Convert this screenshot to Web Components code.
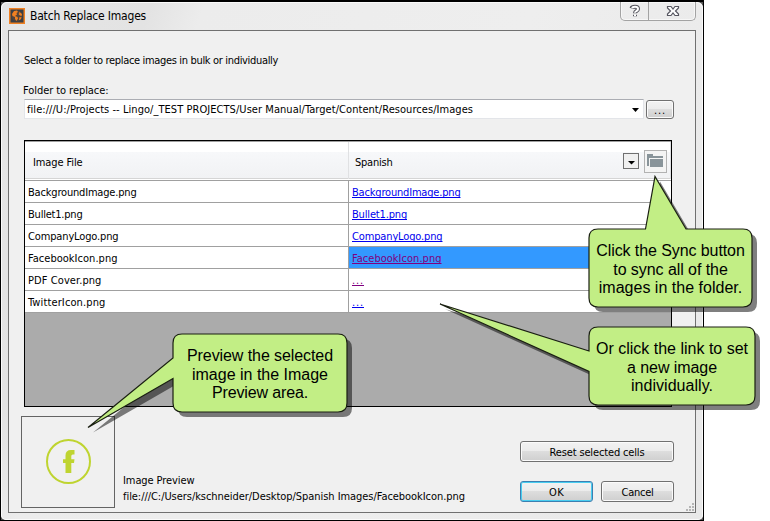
<!DOCTYPE html>
<html lang="en">
<head>
<meta charset="utf-8">
<title>Batch Replace Images</title>
<style>
html,body{margin:0;background:#fff}
body{width:770px;height:521px;overflow:hidden;position:relative;font:11px/14px "DejaVu Sans Condensed","DejaVu Sans",sans-serif;color:#000}
</style>
</head>
<body>
<batch-dialog></batch-dialog>
<call-out x="589" y="229" w="163" h="78" shape="M598 229H645.5L655 176.500L686 229H743Q752 229 752 238V298Q752 307 743 307H598Q589 307 589 298V238Q589 229 598 229Z">
  <fit-text w="148.500">Click the Sync button</fit-text><fit-text w="114.500">to sync all of the</fit-text><fit-text w="143.500">images in the folder.</fit-text>
</call-out>
<call-out x="589" y="327" w="166" h="78" shape="M598 327H746Q755 327 755 336V396Q755 405 746 405H598Q589 405 589 396V371.500L440 304L589 351V336Q589 327 598 327Z">
  <fit-text w="152">Or click the link to set</fit-text><fit-text w="90">a new image</fit-text><fit-text w="82">individually.</fit-text>
</call-out>
<call-out x="173" y="334" w="174" h="78" shape="M182 334H338Q347 334 347 343V403Q347 412 338 412H182Q173 412 173 403V378.500L88 427.500L173 358V343Q173 334 182 334Z">
  <fit-text w="146">Preview the selected</fit-text><fit-text w="136">image in the Image</fit-text><fit-text w="96">Preview area.</fit-text>
</call-out>

<script>
const shadow = (el, html) => {
  const t = document.createElement('template');
  t.innerHTML = html;
  el.attachShadow({mode:'open'}).append(document.importNode(t.content, true));
};

/* One line of text, tracked so that it spans the width given in "w". */
class FitText extends HTMLElement {
  connectedCallback() {
    if (this.shadowRoot) return;
    shadow(this, `<style>:host{display:block;white-space:nowrap;width:max-content}span{display:inline-block;text-decoration:inherit;text-underline-offset:inherit;text-decoration-skip-ink:inherit}</style><span><slot></slot></span>`);
    const s = this.shadowRoot.querySelector('span');
    const w = parseFloat(this.getAttribute('w'));
    const n = this.textContent.length;
    const nat = s.getBoundingClientRect().width;
    if (w && n) { s.style.letterSpacing = (w - nat) / n + 'px'; this.style.width = w + 'px'; }
  }
}

class PushButton extends HTMLElement {
  connectedCallback() {
    if (this.shadowRoot) return;
    shadow(this, `<style>
      :host{display:flex;box-sizing:border-box;padding-top:2px;justify-content:center;align-items:center;border:1px solid #707070;border-radius:3px;
        background:linear-gradient(#f2f2f2 0,#ebebeb 48%,#dddddd 50%,#cfcfcf 100%);box-shadow:inset 0 0 0 1px #fbfbfb}
      :host([primary]){border-color:#3c7fb1;box-shadow:inset 0 0 0 1px #48cdf0}
    </style><slot></slot>`);
  }
}

class TitleBar extends HTMLElement {
  connectedCallback() {
    if (this.shadowRoot) return;
    shadow(this, `<style>
      :host{display:flex;height:28px;padding:0 7px 0 8px;align-items:flex-start;font-size:12px;line-height:16px}
      .logo{margin-top:6px;flex:none}
      fit-text{margin:6px 0 0 5px}
      .ctl{margin-left:auto;display:flex;width:74px;height:18px;border:1px solid #a3a3a3;border-top:0;border-radius:0 0 5px 5px;box-shadow:inset 0 0 0 1px #f7f7f7}
      .ctl svg{display:block}
      .ctl span{width:27px;border-right:1px solid #a3a3a3}
    </style>
    <svg class="logo" width="16" height="16" viewBox="0 0 16 16"><rect x=".75" y=".75" width="14.500" height="14.500" fill="#3b3f45" stroke="#f08021" stroke-width="1.500"/><circle cx="8" cy="8" r="5.400" fill="#54443a"/><path d="M3 6L5 3L8 2.600L9 4L7.500 5L8 6.500L6 8L8.500 9L9 10.500L7.500 13L6 11V9L3.500 8ZM10 3.500L13 6L12.500 8L11 7.500L9.500 6L10.500 5ZM10.500 9L12.800 9.500L11 12H10Z" fill="#f08021"/></svg>
    <fit-text w="116">Batch Replace Images</fit-text>
    <div class="ctl"><span><svg width="27" height="18"><path d="M10.500 6.300Q11 4.800 14 4.800Q17 4.800 17 7Q17 8.300 15.500 9Q14 10 14 11.200M14 12.800V14.300" fill="none" stroke="#53535b" stroke-width="4"/><path d="M11.200 6.300Q11.500 4.800 14 4.800Q17 4.800 17 7Q17 8.300 15.500 9Q14 10 14 10.700M14 12.300V14" fill="none" stroke="#fff" stroke-width="2"/></svg></span>
    <svg width="46" height="18"><path d="M18.500 4.500H22L24 7L26 4.500H29.500V6L26.500 9L29.500 12V13.500H26L24 11L22 13.500H18.500V12L21.500 9L18.500 6Z" fill="#fff" stroke="#565660" stroke-width="1.200"/></svg></div>`);
  }
}

class FileGrid extends HTMLElement {
  connectedCallback() {
    if (this.shadowRoot) return;
    const rows = [
      ['BackgroundImage.png',108.5,'BackgroundImage.png',108.5,''],
      ['Bullet1.png',54.5,'Bullet1.png',55,''],
      ['CompanyLogo.png',90.5,'CompanyLogo.png',90.5,''],
      ['FacebookIcon.png',89.5,'FacebookIcon.png',89.5,'sel seen'],
      ['PDF Cover.png',73.5,'...',12,'seen'],
      ['TwitterIcon.png',77.5,'...',12,'']];
    shadow(this, `<style>
      :host{display:block;box-sizing:border-box;width:648px;height:267px;border:1px solid #000;background:#ababab}
      .head,.row{display:grid;grid-template-columns:324px 1fr}
      .head{height:39px;box-sizing:border-box;border-top:1px solid #a0a0a0;border-bottom:1px solid #fff;background:linear-gradient(#fff 0 10px,#f7f8fa 10px,#f1f2f4 36px,#d5d5d5 36px 37px,#fff 37px)}
      .head>*{display:flex;align-items:flex-start;border-right:1px solid #e0e1e3;box-sizing:border-box}
      .head fit-text{margin:14px 0 0 8px}
      .head>:last-child{padding-right:3px}
      .head>:last-child fit-text{margin-left:6px}
      .drop{margin:11px 5px 0 auto;width:16px;height:16px;flex:none}
      .sync{margin-top:8px;width:23px;height:23px;flex:none}
      .row{height:22px;box-sizing:border-box;border-top:1px solid #a0a0a0;background:#fff}
      .row:last-child{height:23px;border-bottom:1px solid #a0a0a0}
      .row>div{padding:5px 0 0 3px;box-sizing:border-box}
      .row>div:first-child{border-right:1px solid #a0a0a0}
      .row a{color:#00e;display:block;width:max-content;text-underline-offset:1px;text-decoration-skip-ink:none}
      .row a fit-text{text-decoration:underline 1px}
      .seen a{color:#800080}
      .row.sel>div:last-child{background:#39f}
    </style>
    <div class="head"><div><fit-text w="49.500">Image File</fit-text></div><div><fit-text w="37.500">Spanish</fit-text>
      <svg class="drop" viewBox="0 0 16 16"><rect x=".5" y=".5" width="15" height="15" fill="#f0f0f0" stroke="#707070"/><path d="M5 8H12L8.500 11.500Z"/></svg>
      <svg class="sync" viewBox="0 0 23 23"><rect x=".5" y=".5" width="22" height="22" fill="#f4f4f4" stroke="#b2b2b2"/><path d="M3 4H9V6H19V8H5V16H3ZM6 9H19V17H6Z" fill="#89949a"/></svg></div></div>
    ${rows.map(([n,w,l,lw,c])=>`<div class="row ${c}"><div><fit-text w="${w}">${n}</fit-text></div><div><a><fit-text w="${lw}">${l}</fit-text></a></div></div>`).join('')}`);
  }
}

class ImagePreview extends HTMLElement {
  connectedCallback() {
    if (this.shadowRoot) return;
    shadow(this, `<style>
      :host{display:flex;align-items:flex-end}
      .box{box-sizing:border-box;width:94px;height:92px;border:1px solid #646464;display:grid;place-items:center}
      .cap{margin:0 0 3px 8px;line-height:16px}
    </style>
    <div class="box"><svg width="46" height="46" viewBox="-.5 .5 46 46"><circle cx="23" cy="23" r="21.500" stroke-width="2" fill="none" stroke="#bfd430"/><path d="M20 34.500V24.500H17.500V20.800H20V17Q20 11.500 25.500 11.500H29V16H27.300Q25.800 16 25.800 17.600V20.800H29L28.500 24.500H25.800V34.500Z" fill="#bfd430"/></svg></div>
    <div class="cap"><fit-text w="71.500">Image Preview</fit-text><fit-text w="342">file:///C:/Users/kschneider/Desktop/Spanish Images/FacebookIcon.png</fit-text></div>`);
  }
}

class BatchDialog extends HTMLElement {
  connectedCallback() {
    if (this.shadowRoot) return;
    shadow(this, `<style>
      :host{display:flex;flex-direction:column;box-sizing:border-box;width:704px;height:521px;border:1px solid #000;border-top-width:2px;background:#555}
      .frame{flex:1;box-sizing:border-box;border-radius:6px 6px 5px 5px;box-shadow:inset 0 0 0 1px #fafafa;background:linear-gradient(110deg,#e6e6e6 0,#e3e3e3 17%,#ececec 23%,#eee 60%,#e8e8e8 100%)}
      .client{box-sizing:border-box;margin:0 7px;width:688px;height:483px;border:1px solid #707070;background:#f0f0f0;padding:23px 0 0 15px}
      .label{margin:16px 0 0 -1px}
      .line{display:flex;gap:2px;margin-top:1px}
      .combo{box-sizing:border-box;width:620px;height:20px;border:1px solid #e3e5e9;border-top-color:#abadb3;background:#fff;display:flex;align-items:flex-start;padding:3px 4px 0 2px}
      .combo svg{margin:5px 0 0 auto}
      .line push-button{width:28px;height:19px;margin-top:1px}
      file-grid{margin-top:21px}
      .foot{display:flex;justify-content:space-between;margin:9px 20px 0 -3px;width:653px}
      .btns{display:grid;grid-template-columns:73px 73px;gap:19px 8px;padding-top:25px;align-content:start}
      .btns push-button{height:21px}
      .btns push-button:first-child{grid-column:1/3}
      .grip{display:block;margin:-6px 0 0 661px}
    </style>
    <div class="frame"><title-bar></title-bar>
    <div class="client">
      <fit-text w="254">Select a folder to replace images in bulk or individually</fit-text>
      <fit-text class="label" w="85.500">Folder to replace:</fit-text>
      <div class="line"><div class="combo"><fit-text w="446">file:///U:/Projects -- Lingo/_TEST PROJECTS/User Manual/Target/Content/Resources/Images</fit-text><svg width="7" height="4"><path d="M0 0H7L3.500 4Z"/></svg></div><push-button><fit-text w="12">...</fit-text></push-button></div>
      <file-grid></file-grid>
      <div class="foot"><image-preview></image-preview>
        <div class="btns"><push-button><fit-text w="95">Reset selected cells</fit-text></push-button><push-button primary><fit-text w="15">OK</fit-text></push-button><push-button><fit-text w="32">Cancel</fit-text></push-button></div></div>
      <svg class="grip" width="10" height="10" fill="#b5b5b5"><path d="M7 1h2v2h-2zM4 4h2v2h-2zM7 4h2v2h-2zM1 7h2v2h-2zM4 7h2v2h-2zM7 7h2v2h-2z"/></svg>
    </div></div>`);
  }
}

/* Speech balloon: outline in page coordinates, lines of text slotted into its body. */
class CallOut extends HTMLElement {
  connectedCallback() {
    if (this.shadowRoot) return;
    const a = n => this.getAttribute(n), d = a('shape');
    shadow(this, `<style>
      :host{position:absolute;inset:0;pointer-events:none;font:16px/18.5px "Liberation Sans",Arial,sans-serif}
      svg{position:absolute;inset:0}
      .body{position:absolute;left:${a('x')}px;top:${a('y')}px;width:${a('w')}px;height:${a('h')}px;display:flex;flex-direction:column;align-items:center;box-sizing:border-box;padding-top:13px}
    </style>
    <svg width="770" height="521"><path d="${d}" transform="translate(5 5)" fill="rgba(0,0,0,.5)"/><path d="${d}" fill="#c2ee85" stroke="#1a1f12" stroke-width="1.200"/></svg>
    <div class="body"><slot></slot></div>`);
  }
}

customElements.define('batch-dialog', BatchDialog);
customElements.define('title-bar', TitleBar);
customElements.define('file-grid', FileGrid);
customElements.define('image-preview', ImagePreview);
customElements.define('push-button', PushButton);
customElements.define('call-out', CallOut);
customElements.define('fit-text', FitText);
</script>
</body>
</html>
